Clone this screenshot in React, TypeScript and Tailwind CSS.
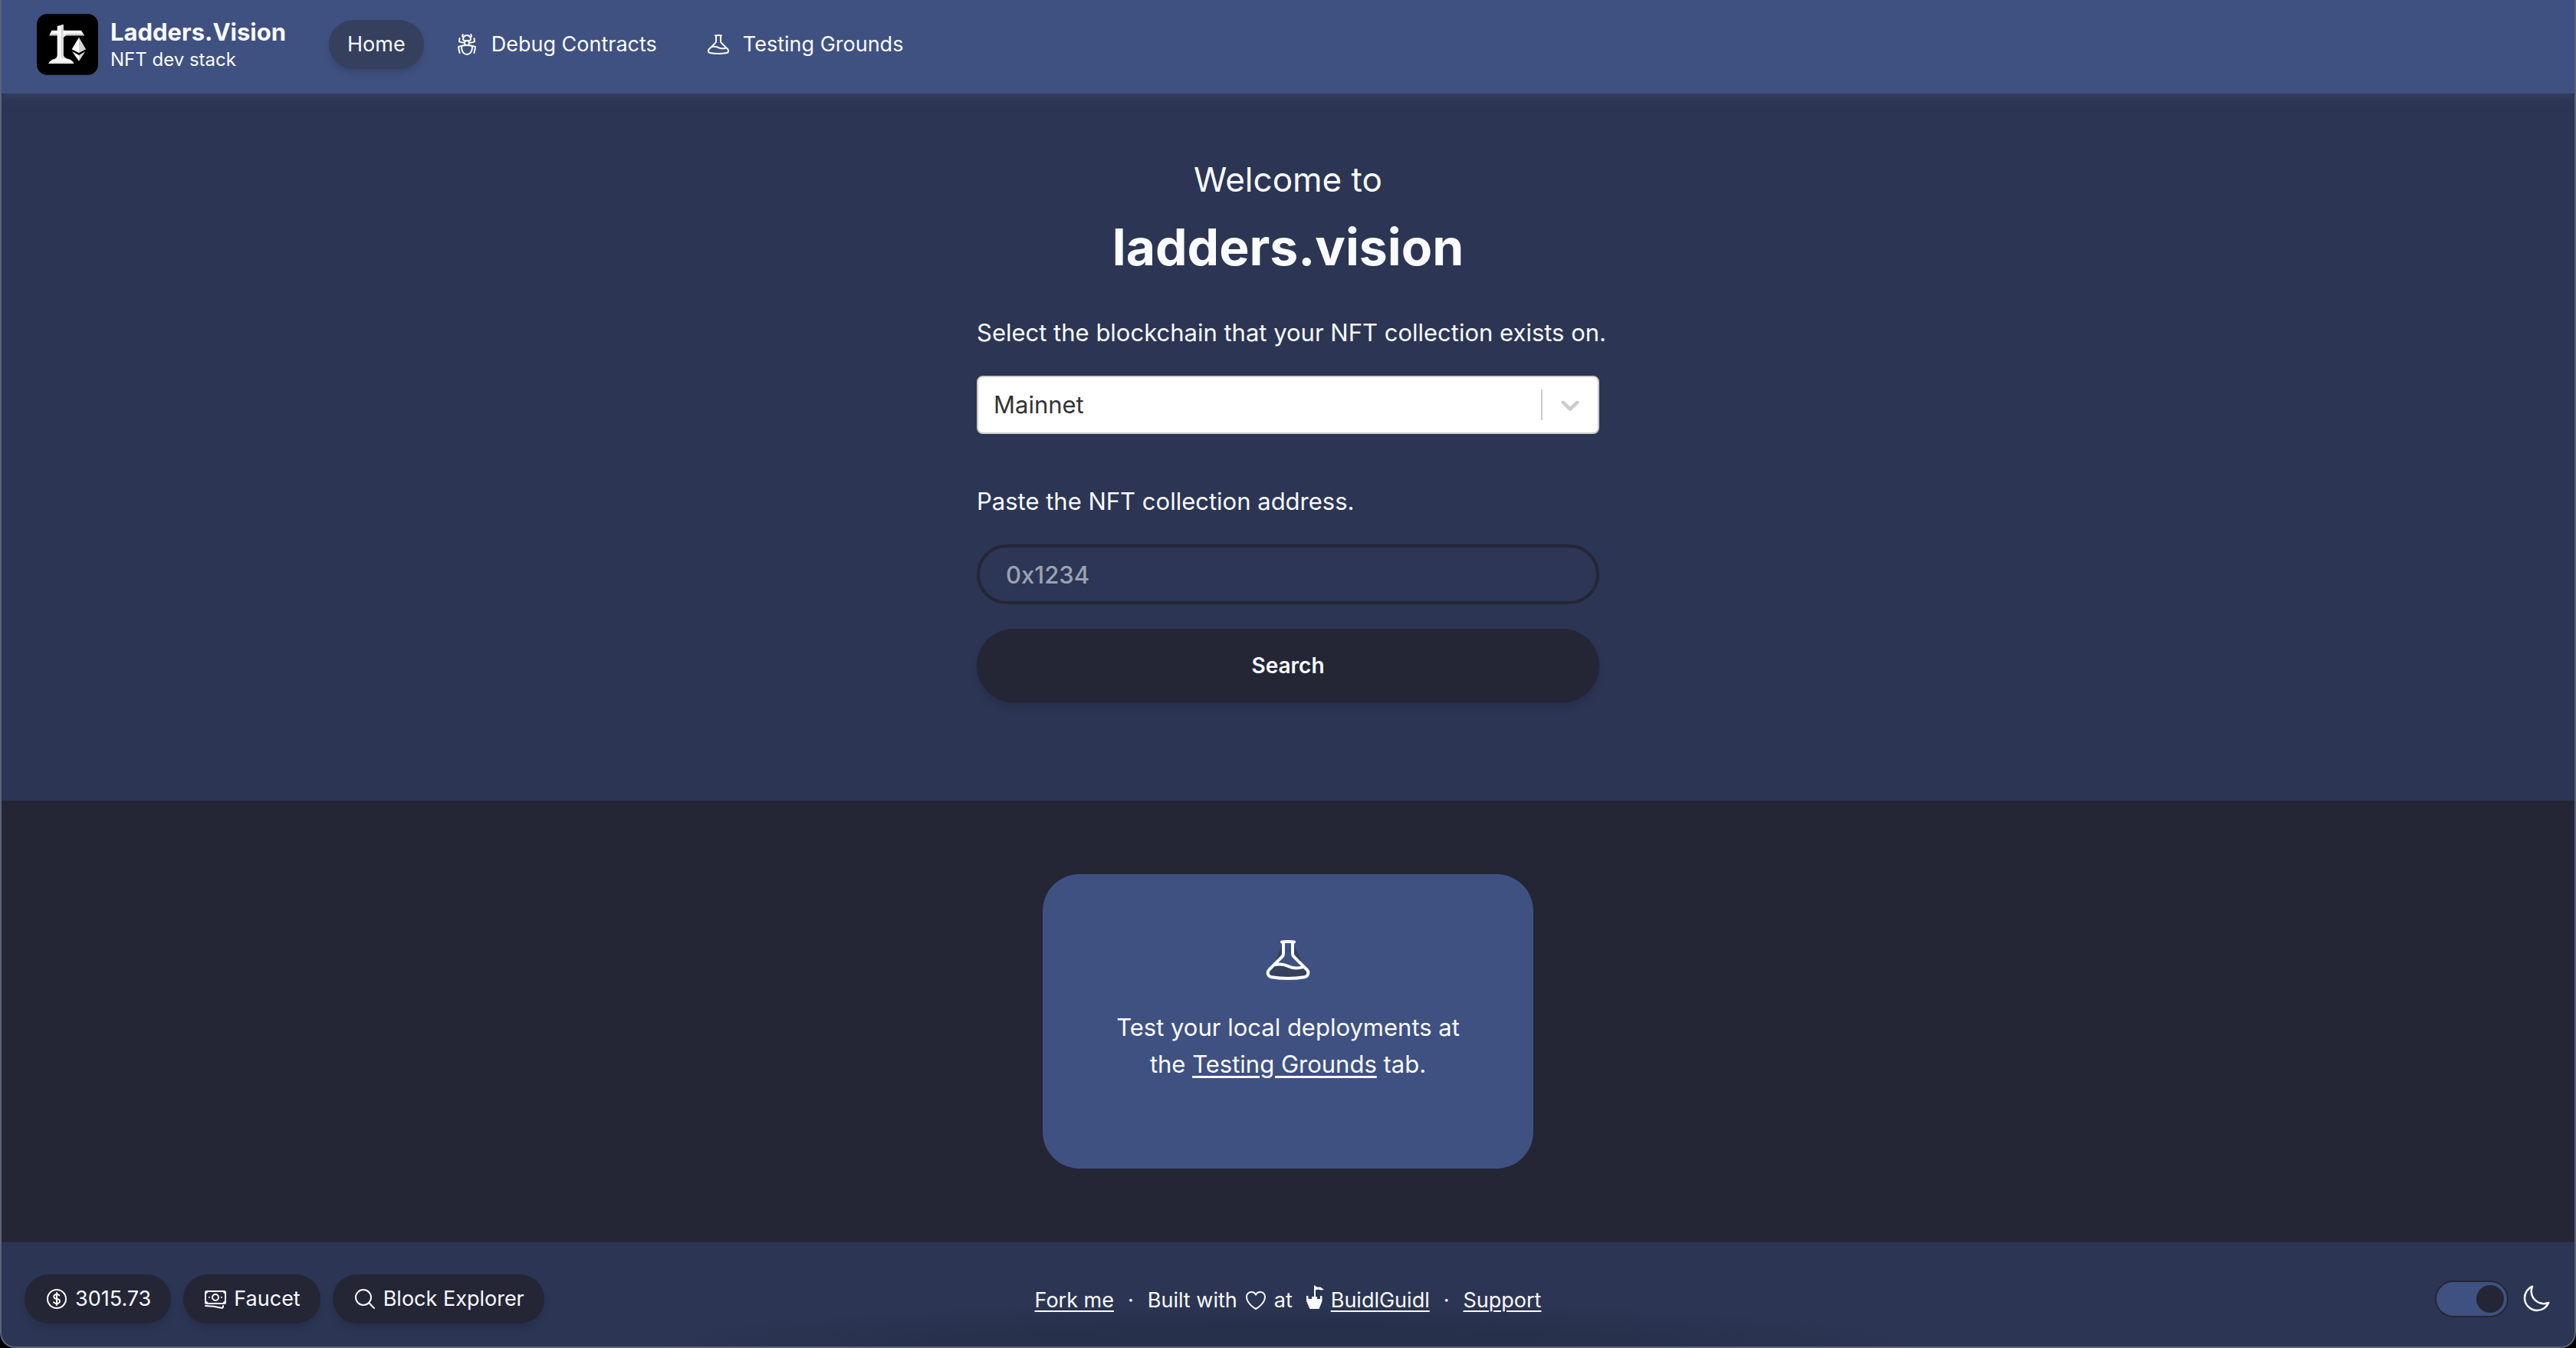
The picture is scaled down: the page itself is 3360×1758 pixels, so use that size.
import { useState } from "react";
import {
  HiOutlineBanknotes,
  HiOutlineBeaker,
  HiOutlineBugAnt,
  HiOutlineCurrencyDollar,
  HiOutlineHeart,
  HiOutlineMagnifyingGlass,
  HiOutlineMoon,
} from "react-icons/hi2";

function Logo() {
  return (
    <svg viewBox="0 0 240 238" className="size-20" role="img" aria-label="Ladders.Vision logo">
      <rect width="240" height="238" rx="40" fill="#000" />
      <path d="M58 64H174L186 84H49Z" fill="#f4f4f4" />
      <path d="M52 77H182L186 84H49Z" fill="#cfcfcf" />
      <path d="M80 47L104 41V64H114V84L104 92V160Q106 172 124 176Q140 180 145 194H46Q52 180 68 176Q80 172 80 160Z" fill="#f7f7f7" />
      <path d="M94 44L104 41V160Q106 170 116 174L94 172Z" fill="#dcdcdc" />
      <path d="M50 187H142L145 194H46Z" fill="#e4e4e4" />
      <path d="M165 91L137 138L165 152Z" fill="#fff" />
      <path d="M165 91L192 138L165 152Z" fill="#d5d5d5" />
      <path d="M138 146L165 161V184Z" fill="#fff" />
      <path d="M190 146L165 161V184Z" fill="#d5d5d5" />
    </svg>
  );
}

function Castle() {
  return (
    <svg viewBox="0 0 24 40" className="h-10 w-6" fill="currentColor" aria-hidden="true">
      <path d="M10 0L13 2Q15 3 17 2.5Q19 2 20 4L23 5.500Q20 7 17 6Q14 5.500 12 6.500V15H14V18H18V14H20.500V21L16.500 31H4.500L0 21V14H2.500V18H7V15H10Z" />
    </svg>
  );
}

const navLinks = [
  { label: "Debug Contracts", Icon: HiOutlineBugAnt },
  { label: "Testing Grounds", Icon: HiOutlineBeaker },
];

function Header() {
  return (
    <header className="relative flex items-center bg-[#3f5180] px-[46px] pt-[18px] pb-6 shadow-[0_8px_12px_-2px_#35405e,0_4px_8px_-4px_#35405e]">
      <a href="#" className="flex items-center gap-4">
        <Logo />
        <span className="flex flex-col">
          <span className="text-[31px] leading-10 font-bold">Ladders.Vision</span>
          <span className="text-[24px] leading-8">NFT dev stack</span>
        </span>
      </a>
      <nav className="ml-14 flex gap-4">
        <a href="#" className="flex h-16 items-center rounded-full bg-[#35405e] px-6 text-[27px] shadow-[0_8px_12px_-2px_rgba(0,0,0,0.1),0_4px_8px_-4px_rgba(0,0,0,0.1)]">
          Home
        </a>
        {navLinks.map(({ label, Icon }) => (
          <a key={label} href="#" className="flex h-16 items-center gap-4 px-6 text-[27px]">
            <Icon className="size-8" />
            {label}
          </a>
        ))}
      </nav>
    </header>
  );
}

function SearchForm() {
  return (
    <form className="flex w-[812px] max-w-full flex-col" onSubmit={(e) => e.preventDefault()}>
      <label htmlFor="chain" className="mb-8 text-[31px] leading-12 whitespace-nowrap">
        Select the blockchain that your NFT collection exists on.
      </label>
      <div className="relative mb-16">
        <select
          id="chain"
          className="block h-19 w-full appearance-none rounded-lg border-2 border-[#cccccc] bg-white px-5 text-[31px] text-[#333333]"
        >
          <option>Mainnet</option>
          <option>Goerli</option>
          <option>Sepolia</option>
        </select>
        <span className="pointer-events-none absolute inset-y-0 right-0 flex items-center gap-4 pr-[18px]">
          <span className="h-10 w-0.5 bg-[#cccccc]" />
          <svg viewBox="0 0 20 20" className="size-10" fill="#cccccc" aria-hidden="true">
            <path d="M4.516 7.548c0.436-0.446 1.043-0.481 1.576 0l3.908 3.747 3.908-3.747c0.533-0.481 1.141-0.446 1.574 0 0.436 0.445 0.408 1.197 0 1.615-0.406 0.418-4.695 4.502-4.695 4.502-0.217 0.223-0.502 0.335-0.787 0.335s-0.57-0.112-0.789-0.335c0 0-4.287-4.084-4.695-4.502s-0.436-1.17 0-1.615z" />
          </svg>
        </span>
      </div>
      <label htmlFor="address" className="mb-8 text-[31px] leading-12">
        Paste the NFT collection address.
      </label>
      <input
        id="address"
        type="text"
        placeholder="0x1234"
        className="mb-8 h-[78px] rounded-full border-4 border-[#242636] bg-[#2d3656] px-[34px] text-[31px] font-medium placeholder:text-[#9ca3af]"
      />
      <button
        type="submit"
        className="h-24 rounded-full bg-[#242636] text-[28px] font-semibold shadow-[0_8px_12px_-2px_rgba(0,0,0,0.1),0_4px_8px_-4px_rgba(0,0,0,0.1)]"
      >
        Search
      </button>
    </form>
  );
}

const footerButtons = [
  { label: "3015.73", Icon: HiOutlineCurrencyDollar },
  { label: "Faucet", Icon: HiOutlineBanknotes },
  { label: "Block Explorer", Icon: HiOutlineMagnifyingGlass },
];

function Footer() {
  const [dark, setDark] = useState(true);
  return (
    <footer className="grid grid-cols-[1fr_auto_1fr] items-center bg-[radial-gradient(ellipse_25%_60px_at_50%_100%,#26304a,#26304a_40%,transparent)] px-[30px] pt-[42px] pb-[30px]">
      <div className="flex gap-4">
        {footerButtons.map(({ label, Icon }) => (
          <button
            key={label}
            type="button"
            className="flex h-16 items-center gap-2 rounded-full bg-[#242636] px-[26px] text-[27px] shadow-[0_8px_12px_-2px_rgba(0,0,0,0.1),0_4px_8px_-4px_rgba(0,0,0,0.1)]"
          >
            <Icon className="size-8" />
            {label}
          </button>
        ))}
      </div>
      <div className="flex items-center gap-[18px] pt-1 text-[27px]">
        <a href="#" className="underline decoration-2 underline-offset-4">Fork me</a>
        <span>·</span>
        <span className="flex items-center gap-2">
          Built with
          <HiOutlineHeart className="size-8" aria-label="love" />
          at
        </span>
        <a href="#" className="flex items-center gap-2">
          <Castle />
          <span className="underline decoration-2 underline-offset-4">BuidlGuidl</span>
        </a>
        <span>·</span>
        <a href="#" className="underline decoration-2 underline-offset-4">Support</a>
      </div>
      <label className="flex items-center gap-4 justify-self-end">
        <input
          type="checkbox"
          aria-label="Dark theme"
          checked={dark}
          onChange={(e) => setDark(e.target.checked)}
          className="peer sr-only"
        />
        <span className="flex h-12 w-24 items-center rounded-full border-2 border-[#242636] bg-[#3f5180] px-1 peer-checked:justify-end">
          <span className="size-9 rounded-full bg-[#242636]" />
        </span>
        <HiOutlineMoon className="size-10" />
      </label>
    </footer>
  );
}

export default function App() {
  return (
    <div className="bg-black font-[Inter,sans-serif] text-[#f9fbff]">
      <div className="flex min-h-screen flex-col overflow-hidden rounded-b-[20px] border-x-2 border-b-2 border-[#5b6379] bg-[#2c3553]">
        <Header />
        <main className="flex grow flex-col">
          <section className="flex flex-col items-center px-8 pt-20 pb-32">
            <h1 className="mb-12 text-center">
              <span className="mb-4 block text-[44px] leading-16">Welcome to</span>
              <span className="block text-[66px] leading-20 font-bold">ladders.vision</span>
            </h1>
            <SearchForm />
          </section>
          <section className="flex grow justify-center bg-[#242636] px-8 py-24">
            <div className="flex w-160 flex-col items-center rounded-[48px] bg-[#3f5180] px-20 py-20 text-center">
              <HiOutlineBeaker className="size-16 fill-[#35405e]" />
              <p className="mt-8 text-[31px] leading-12">
                Test your local deployments at the{" "}
                <a href="#" className="underline underline-offset-4">Testing Grounds</a> tab.
              </p>
            </div>
          </section>
        </main>
        <Footer />
      </div>
    </div>
  );
}
